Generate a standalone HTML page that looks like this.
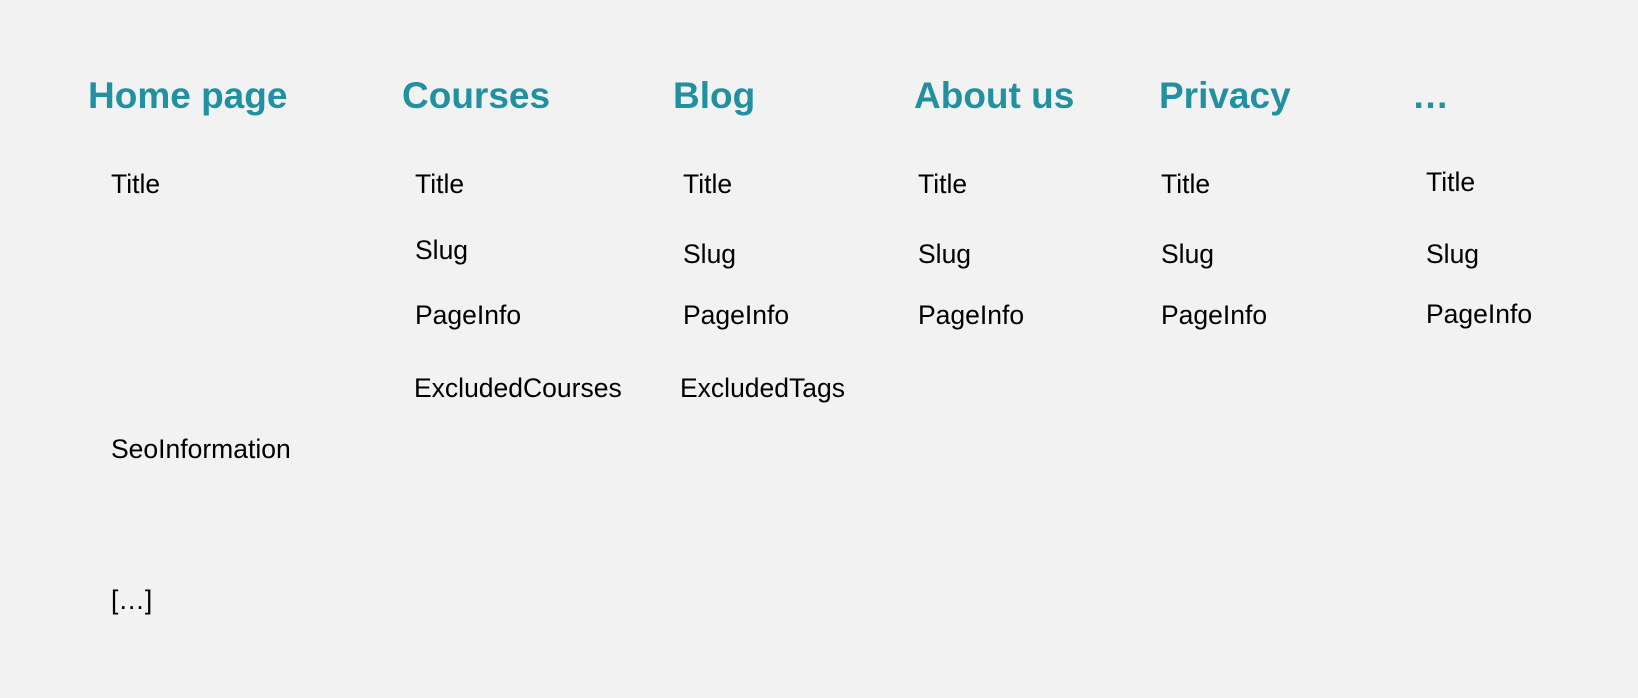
<!DOCTYPE html>
<html><head><style>
body{margin:0;width:1638px;height:698px;background:#f2f2f2;position:relative;overflow:hidden;font-family:"Liberation Sans",sans-serif}
.h{position:absolute;font-size:37px;line-height:37px;font-weight:bold;color:#2190a0;white-space:nowrap}
.t{position:absolute;font-size:26.5px;line-height:26px;color:#000;white-space:nowrap}
</style></head><body>
<div class="h" style="left:88px;top:77px">Home page</div>
<div class="h" style="left:402px;top:77px">Courses</div>
<div class="h" style="left:673px;top:77px">Blog</div>
<div class="h" style="left:914px;top:77px">About us</div>
<div class="h" style="left:1159px;top:77px">Privacy</div>
<div class="h" style="left:1412px;top:77px">…</div>

<div class="t" style="left:111px;top:171px">Title</div>
<div class="t" style="left:111px;top:436px">SeoInformation</div>
<div class="t" style="left:111px;top:587px">[…]</div>

<div class="t" style="left:415px;top:171px">Title</div>
<div class="t" style="left:415px;top:237px">Slug</div>
<div class="t" style="left:415px;top:302px">PageInfo</div>
<div class="t" style="left:414px;top:375px">ExcludedCourses</div>

<div class="t" style="left:683px;top:171px">Title</div>
<div class="t" style="left:683px;top:241px">Slug</div>
<div class="t" style="left:683px;top:302px">PageInfo</div>
<div class="t" style="left:680px;top:375px">ExcludedTags</div>

<div class="t" style="left:918px;top:171px">Title</div>
<div class="t" style="left:918px;top:241px">Slug</div>
<div class="t" style="left:918px;top:302px">PageInfo</div>

<div class="t" style="left:1161px;top:171px">Title</div>
<div class="t" style="left:1161px;top:241px">Slug</div>
<div class="t" style="left:1161px;top:302px">PageInfo</div>

<div class="t" style="left:1426px;top:169px">Title</div>
<div class="t" style="left:1426px;top:241px">Slug</div>
<div class="t" style="left:1426px;top:301px">PageInfo</div>
</body></html>
